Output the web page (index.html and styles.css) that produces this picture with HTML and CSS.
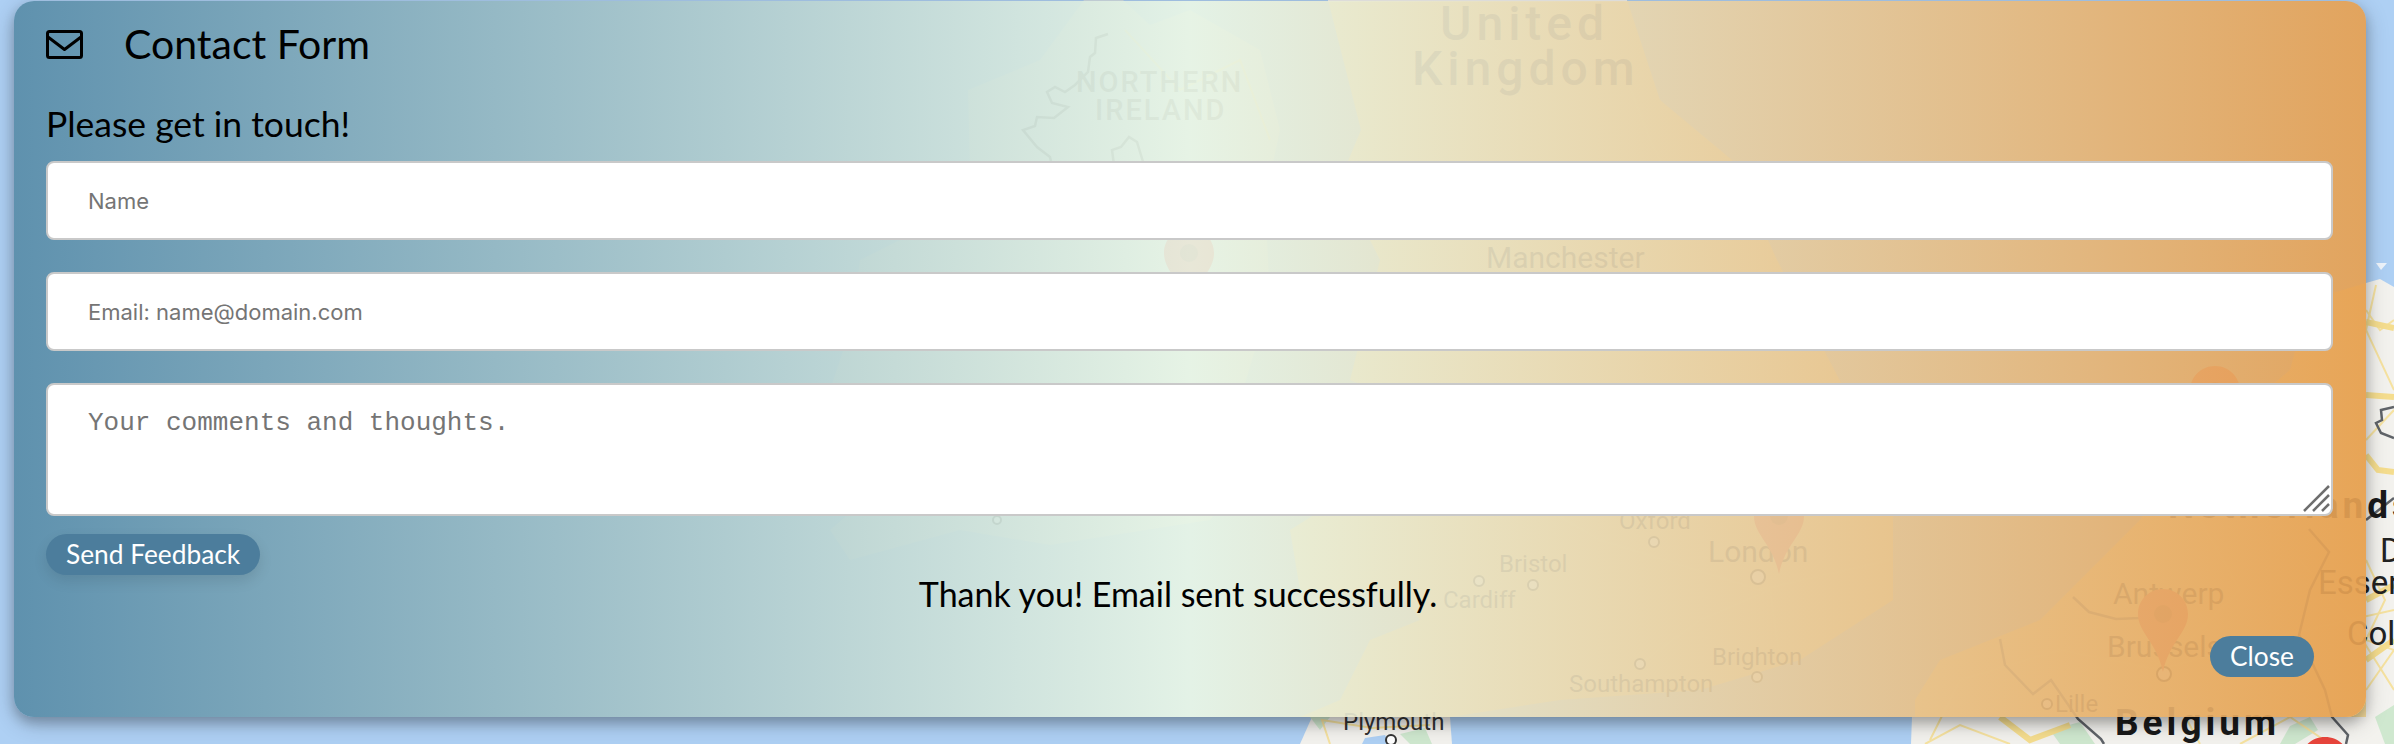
FILE: index.html
```html
<!DOCTYPE html>
<html lang="en">
<head>
  <meta charset="UTF-8">
  <meta name="viewport" content="width=device-width, initial-scale=1.0">
  <title>Contact Form</title>
  <link rel="stylesheet" href="styles.css">
</head>
<body>

  <!-- Map behind the dialog -->
  <svg class="map" viewBox="0 0 2394 744" xmlns="http://www.w3.org/2000/svg" aria-hidden="true">
    <defs>
      <g id="pin">
        <path d="M25 0C11 0 0 11 0 25c0 19 19 28 25 58c6-30 25-39 25-58C50 11 39 0 25 0z"></path>
        <circle class="pin-dot" cx="25" cy="25" r="9"></circle>
      </g>
    </defs>

    <!-- land under the dialog, kept close to the sea colour -->
    <polygon class="land-under" points="1084,0 1123,0 1150,25 1190,10 1260,50 1280,130 1265,200 1270,300 1240,400 1250,470 1210,520 1050,545 960,530 850,560 830,530 900,470 820,420 850,330 860,260 940,220 970,170 968,90 1040,60"></polygon>
    <polygon class="land-warm" points="1328,0 1627,0 1660,100 1732,160 1777,260 1850,400 1893,500 1893,600 1800,660 1700,690 1560,700 1450,717 1300,717 1340,700 1370,640 1420,620 1400,590 1300,590 1290,530 1370,480 1400,400 1350,380 1380,260 1340,180 1361,130"></polygon>
    <polygon class="land-warm" points="1915,717 1915,700 1940,660 2040,620 2060,600 2100,560 2140,520 2170,470 2290,370 2309,300 2366,283 2366,717"></polygon>

    <!-- land that shows around the dialog -->
    <polygon class="land" points="1312,717 1450,717 1452,744 1300,744"></polygon>
    <polygon class="land" points="1328,0 1627,0 1627,2 1328,2"></polygon>
    <polygon class="land" points="1912,717 2366,717 2394,717 2394,744 1911,744"></polygon>
    <polygon class="land" points="2366,283 2380,279 2394,287 2394,717 2366,717"></polygon>

    <polygon class="park" points="1310,717 1330,717 1320,730"></polygon>
    <polygon class="park" points="1400,734 1425,728 1432,744 1410,744"></polygon>
    <polygon class="park" points="2050,730 2080,722 2095,744 2060,744"></polygon>
    <polygon class="park" points="2290,726 2310,717 2318,730 2295,744 2280,744"></polygon>
    <polygon class="park" points="2375,717 2394,705 2394,744 2385,744"></polygon>
    <polygon class="sea-patch" points="1365,738 1385,735 1390,744 1362,744"></polygon>

    <polyline class="road" points="1330,744 1322,720 1372,728 1430,725"></polyline>
    <polyline class="road" points="1125,30 1180,90 1240,60 1270,140"></polyline>
    <polyline class="road" points="1480,40 1540,80 1620,60 1650,140 1700,240"></polyline>
    <polyline class="road" points="1360,480 1480,470 1600,540 1760,590 1890,560"></polyline>
    <polyline class="road" points="1640,664 1700,620 1770,590 1780,660"></polyline>
    <polyline class="road" points="1930,740 1960,680 2060,650 2160,670 2260,640 2394,610"></polyline>
    <polyline class="road" points="2200,520 2240,590 2160,670 2200,744"></polyline>
    <polyline class="road" points="2300,560 2350,620 2394,690"></polyline>
    <polyline class="road" points="2366,310 2380,330 2394,320"></polyline>
    <polyline class="road" points="2376,285 2366,330 2394,390"></polyline>
    <polyline class="road" points="2366,440 2394,410"></polyline>
    <polyline class="road" points="2366,560 2385,600 2366,640 2394,650"></polyline>
    <polyline class="road" points="2366,690 2394,650"></polyline>
    <polyline class="road" points="1925,744 1960,725 2010,744"></polyline>
    <polyline class="road" points="2240,744 2290,717 2330,744"></polyline>
    <polyline class="road-main" points="2366,322 2394,328"></polyline>
    <polyline class="road-main" points="2366,395 2394,397"></polyline>
    <polyline class="road-main" points="2366,455 2378,470 2394,472"></polyline>
    <polyline class="road-main" points="2366,600 2394,585"></polyline>
    <polyline class="road-main" points="2366,660 2394,640"></polyline>
    <polyline class="road-main" points="2000,717 2030,740 2070,725"></polyline>

    <polyline class="border" points="1108,34 1096,38 1095,53 1090,57 1088,72 1075,85 1065,92 1055,87 1047,92 1052,103 1068,107 1054,118 1037,117 1035,126 1023,130 1037,147 1050,157 1053,170"></polyline>
    <polyline class="border" points="1144,165 1137,142 1129,137 1121,147 1112,150 1114,165"></polyline>
    <polyline class="border" points="2073,597 2089,612 2116,619 2140,618 2150,610"></polyline>
    <polyline class="border" points="2000,639 2005,665 2033,694 2051,680 2078,719 2101,739 2104,744"></polyline>
    <polyline class="border" points="2309,529 2329,552 2310,590 2299,635 2325,690 2332,717 2348,735 2346,744"></polyline>
    <polyline class="border" points="2394,407 2381,410 2382,420 2376,423 2381,433 2394,438"></polyline>
    <polyline class="border" points="2366,520 2394,498"></polyline>

    <text class="country" x="1440" y="40">United</text>
    <text class="country" x="1412" y="85">Kingdom</text>
    <text class="region" x="1076" y="92">NORTHERN</text>
    <text class="region" x="1095" y="120">IRELAND</text>
    <text class="city" x="1280" y="182">Isle of Man</text>
    <text class="city-large" x="1486" y="268">Manchester</text>
    <text class="city" x="1157" y="295">Dublin</text>
    <text class="city" x="940" y="405">Limerick</text>
    <text class="city" x="1499" y="572">Bristol</text>
    <text class="city" x="1443" y="608">Cardiff</text>
    <text class="city" x="1619" y="529">Oxford</text>
    <text class="city-large" x="1708" y="562">London</text>
    <text class="city" x="1712" y="665">Brighton</text>
    <text class="city" x="1569" y="692">Southampton</text>
    <text class="city-large" x="2113" y="604">Antwerp</text>
    <text class="city-large" x="2107" y="657">Brussels</text>
    <text class="city" x="2055" y="712">Lille</text>
    <text class="city" x="1343" y="730">Plymouth</text>
    <text class="city-wide" x="2318" y="594">Essen</text>
    <text class="city-wide" x="2347" y="645">Cologne</text>
    <text class="city-wide" x="2380" y="562">Dortmund</text>
    <text class="country-small" x="2168" y="518">Netherlands</text>
    <text class="country-small" x="2115" y="735">Belgium</text>

    <circle class="town" cx="997" cy="520" r="4"></circle>
    <circle class="town" cx="1479" cy="581" r="5"></circle>
    <circle class="town" cx="1533" cy="585" r="5"></circle>
    <circle class="town" cx="1654" cy="542" r="5"></circle>
    <circle class="town" cx="1757" cy="677" r="5"></circle>
    <circle class="town" cx="1640" cy="664" r="5"></circle>
    <circle class="town" cx="2047" cy="704" r="5"></circle>
    <circle class="town" cx="1391" cy="740" r="5"></circle>
    <circle class="town" cx="1758" cy="577" r="7"></circle>
    <circle class="town" cx="2164" cy="674" r="7"></circle>

    <use class="pin" href="#pin" x="1164" y="228"></use>
    <use class="pin" href="#pin" x="1754" y="491"></use>
    <use class="pin" href="#pin" x="2138" y="589"></use>
    <use class="pin" href="#pin" x="2190" y="366"></use>
    <use class="pin" href="#pin" x="2300" y="737"></use>
    <polygon class="caret" points="2376,263 2387,263 2381,270"></polygon>
  </svg>

  <!-- Contact dialog -->
  <div class="modal">
    <div class="modal-header">
      <svg class="mail-icon" viewBox="0 0 37 29" xmlns="http://www.w3.org/2000/svg" aria-hidden="true">
        <rect x="1.5" y="1.5" width="34" height="26" rx="2"></rect>
        <path d="M2 7l16.5 12.5L35 7"></path>
      </svg>
      <h1>Contact Form</h1>
    </div>

    <form class="contact-form">
      <h2>Please get in touch!</h2>
      <input type="text" class="field" placeholder="Name">
      <input type="text" class="field" placeholder="Email: name@domain.com">
      <div class="comment-box">
        <textarea class="comments" placeholder="Your comments and thoughts."></textarea>
        <svg class="grip" viewBox="0 0 27 27" xmlns="http://www.w3.org/2000/svg" aria-hidden="true">
          <path d="M1 26L26 1M10 26L26 10M19 26l7-7"></path>
        </svg>
      </div>
      <button type="button" class="btn btn-send">Send Feedback</button>
      <p class="status">Thank you! Email sent successfully.</p>
    </form>

    <div class="modal-footer">
      <button type="button" class="btn">Close</button>
    </div>
  </div>

</body>
</html>
```

FILE: styles.css
```css
html, body { height: 100%; }
body { margin: 0; overflow: hidden; background: #aed0f4; font-family: Lato, "Open Sans", sans-serif; color: #000; }

/* map canvas */
.map { position: absolute; top: 0; left: 0; width: 2394px; height: 744px; }
.land { fill: #f3f2ee; }
.land-under { fill: #d2dfe6; }
.land-warm { fill: #f6dc9c; }
.park { fill: #cfe8cf; }
.sea-patch { fill: #aed0f4; }
.road { fill: none; stroke: #f6e2a0; stroke-width: 2; }
.road-main { fill: none; stroke: #f5dd8e; stroke-width: 6; }
.border { fill: none; stroke: #5f6368; stroke-width: 2.5; }
.town { fill: #fff; stroke: #333; stroke-width: 2; }
.pin { fill: #e8453c; }
.pin-dot { fill: #a82a22; }
.caret { fill: #eef4fb; }
.map text { font-family: Roboto, sans-serif; fill: #222; }
.map .country { font-size: 48px; font-weight: 500; letter-spacing: 5px; fill: #555; }
.map .region { font-size: 29px; font-weight: 500; letter-spacing: 2px; fill: #666; }
.map .city { font-size: 24px; fill: #333; }
.map .city-large { font-size: 30px; fill: #333; }
.map .city-wide { font-size: 33px; fill: #222; }
.map .country-small { font-size: 37px; font-weight: 700; letter-spacing: 4px; fill: #1a1a1a; }

/* dialog */
.modal { position: relative; box-sizing: border-box; width: 2352px; height: 716px; margin: 1px 0 0 14px; padding: 0 33px 0 32px; border-radius: 20px;
  background: linear-gradient(90deg, rgba(88,140,168,.92), rgba(232,245,229,.92) 50%, rgba(230,160,81,.92));
  box-shadow: 0 6px 12px rgba(0,0,0,.22), 0 6px 24px rgba(0,0,0,.2); }
.modal-header { display: flex; align-items: center; gap: 41px; height: 86px; }
.mail-icon { width: 37px; height: 29px; fill: none; stroke: #000; stroke-width: 3; stroke-linejoin: round; stroke-linecap: round; }
h1 { margin: 0; font-size: 41px; font-weight: 400; line-height: 84px; }
h2 { margin: 0; height: 74px; box-sizing: border-box; padding-top: 13px; font-size: 35.5px; font-weight: 400; line-height: 48px; }

.contact-form { display: flex; flex-direction: column; align-items: stretch; }
.field { box-sizing: border-box; width: 100%; height: 79px; margin-bottom: 32px; padding: 1px 40px 0; border: 2px solid #c9c9c9; border-radius: 8px; background: #fff; font-family: Inter, sans-serif; font-size: 22px; }
.field::placeholder { color: #757575; opacity: 1; }
.comment-box { position: relative; height: 133px; margin-bottom: 18px; }
.comments { display: block; box-sizing: border-box; width: 100%; height: 133px; padding: 23px 40px 0; border: 2px solid #c9c9c9; border-radius: 8px; background: #fff; font-family: "Liberation Mono", monospace; font-size: 26px; resize: none; }
.comments::placeholder { color: #757575; opacity: 1; }
.grip { position: absolute; right: 3px; bottom: 4px; width: 27px; height: 27px; fill: none; stroke: #6e6e6e; stroke-width: 2.5; }

.btn { height: 41px; padding: 0 20px; border: none; border-radius: 21px; background: #4c7d9c; color: #fff; font-family: Lato, "Open Sans", sans-serif; font-size: 26.3px; line-height: 41px; }
.btn-send { align-self: flex-start; box-shadow: 0 6px 14px rgba(0,0,0,.1); }
.status { margin: -1px 0 0; padding-right: 23px; text-align: center; font-size: 34px; line-height: 40px; }
.modal-footer { display: flex; justify-content: flex-end; margin: 22px 19px 0 0; }
```
